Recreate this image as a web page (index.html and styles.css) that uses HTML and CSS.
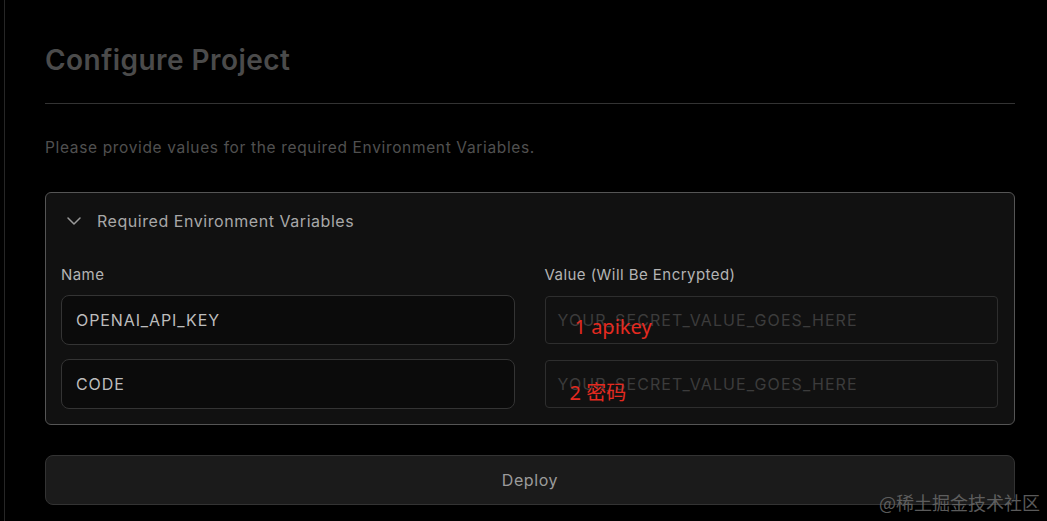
FILE: index.html
```html
<!DOCTYPE html>
<html>
<head>
<meta charset="utf-8">
<link rel="stylesheet" href="styles.css">
</head>
<body>
<div class="page">
  <h1 class="title">Configure Project</h1>
  <div class="rule"></div>
  <p class="subtitle">Please provide values for the required Environment Variables.</p>
  <div class="panel">
    <div class="panel-head">
      <svg class="chev" width="14" height="8" viewBox="0 0 14 8"><path d="M1 1 L7 7 L13 1" fill="none" stroke="#9a9a9a" stroke-width="1.5" stroke-linecap="round" stroke-linejoin="round"/></svg>
      <span>Required Environment Variables</span>
    </div>
    <div class="grid">
      <div class="label">Name</div>
      <div class="label">Value (Will Be Encrypted)</div>
      <div class="name-input">OPENAI_API_KEY</div>
      <div class="value-input"><span class="ph">YOUR_SECRET_VALUE_GOES_HERE</span><span class="note note1">1 apikey</span></div>
      <div class="name-input">CODE</div>
      <div class="value-input"><span class="ph">YOUR_SECRET_VALUE_GOES_HERE</span><span class="note note2">2 密码</span></div>
    </div>
  </div>
  <div class="deploy">Deploy</div>
</div>
<div class="watermark">@稀土掘金技术社区</div>
</body>
</html>
```

FILE: styles.css
```css
html, body {
  margin: 0;
  padding: 0;
  background: #000;
  height: 100%;
  overflow: hidden;
}
body {
  font-family: Inter, "Noto Sans", "Noto Sans CJK SC", sans-serif;
}
.page {
  margin-left: 4px;
  border-left: 1px solid #262626;
  min-height: 521px;
  padding: 0 32px 0 40px;
  box-sizing: border-box;
}
.title {
  margin: 0;
  padding-top: 42px;
  font-size: 28px;
  line-height: 36px;
  font-weight: 600;
  color: #4b4b4b;
  letter-spacing: 0.45px;
}
.rule {
  margin-top: 25px;
  height: 1px;
  background: #333;
}
.subtitle {
  margin: 32px 0 0;
  font-size: 15.5px;
  line-height: 24px;
  color: #505050;
  font-weight: 400;
  letter-spacing: 0.65px;
}
.panel {
  margin-top: 32px;
  border: 1px solid #555;
  border-radius: 6px;
  background: #111;
  padding: 0 16px 15px 15px;
}
.panel-head {
  display: flex;
  align-items: center;
  gap: 16px;
  height: 56px;
  padding-left: 6px;
  color: #a8a8a8;
  font-size: 16px;
  letter-spacing: 0.55px;
}
.grid {
  display: grid;
  grid-template-columns: 1fr 1fr;
  column-gap: 30px;
  row-gap: 14px;
  align-items: center;
  padding-top: 16px;
}
.label {
  font-size: 15px;
  color: #b4b4b4;
  line-height: 20px;
  margin-bottom: -4px;
  letter-spacing: 0.45px;
}
.name-input {
  height: 50px;
  box-sizing: border-box;
  border: 1px solid #343434;
  border-radius: 8px;
  background: #0b0b0b;
  color: #bdbdbd;
  font-size: 16px;
  letter-spacing: 0.9px;
  display: flex;
  align-items: center;
  padding-left: 14px;
}
.value-input {
  position: relative;
  height: 48px;
  box-sizing: border-box;
  border: 1px solid #2e2e2e;
  border-radius: 4px;
  background: #111;
  display: flex;
  align-items: center;
  padding-left: 12px;
}
.ph {
  color: #3c3c3c;
  font-size: 16px;
  letter-spacing: 1.1px;
}
.note {
  position: absolute;
  color: #e42a20;
  font-size: 20px;
  font-family: "Noto Sans", "Noto Sans CJK SC", sans-serif;
  line-height: 28px;
}
.note1 { left: 29px; top: 16px; }
.note2 { left: 24px; top: 18px; }
.deploy {
  margin-top: 30px;
  height: 50px;
  box-sizing: border-box;
  border: 1px solid #333;
  border-radius: 8px;
  background: #1b1b1b;
  color: #9b9b9b;
  font-size: 16px;
  letter-spacing: 0.6px;
  display: flex;
  align-items: center;
  justify-content: center;
}
.watermark {
  position: absolute;
  right: 7px;
  bottom: 6px;
  color: #6a6a6a;
  font-size: 18px;
  font-family: "Noto Sans CJK SC", sans-serif;
  opacity: 0.85;
}
```
